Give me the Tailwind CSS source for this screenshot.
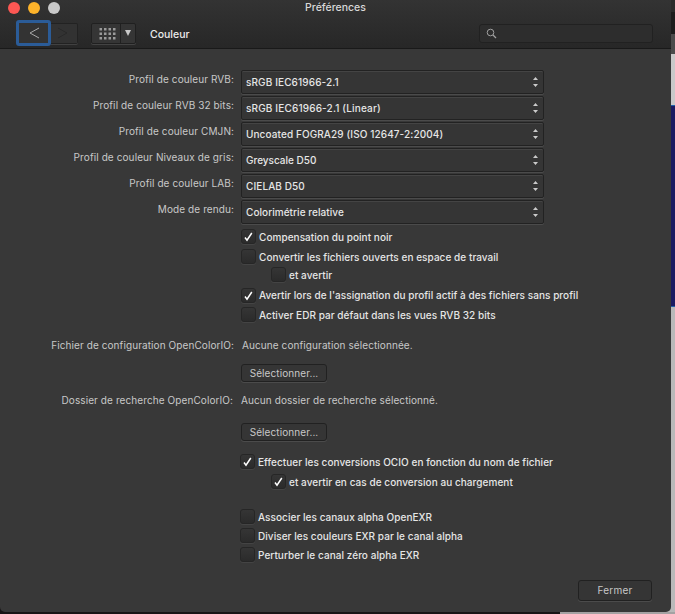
<!DOCTYPE html>
<html lang="fr">
<head>
<meta charset="utf-8">
<title>Préférences</title>
<script src="https://cdn.jsdelivr.net/npm/@tailwindcss/browser@4"></script>
</head>
<body class="w-[675px] h-[614px] overflow-hidden bg-[#171415] flex font-['Inter',sans-serif] text-[10px] leading-[15px] text-[#e6e6e6] relative">
<!-- desktop behind the window -->
<div class="absolute right-0 top-0 w-6 h-[614px] flex flex-col">
  <div class="h-3 bg-[#2b2b2b]"></div>
  <div class="h-[22px] bg-[#1d1d1d]"></div>
  <div class="h-5 bg-[#4b4b4b]"></div>
  <div class="h-[51px] bg-[#c9c9c9]"></div>
  <div class="h-[202px] bg-[#1b1b62] border-y border-[#2260a8]"></div>
  <div class="h-[306px] bg-[#b9b9b9]"></div>
</div>
<div class="absolute left-[560px] top-[612px] w-[115px] h-[2px] bg-[#a5a2a3]"></div>
<main class="relative w-[671px] h-[612px] rounded-b-[5px] bg-[#383838] flex flex-col overflow-hidden">
  <header class="h-[49px] shrink-0 bg-linear-to-b from-[#333333] to-[#272727] border-b border-[#191919]">
    <div class="h-4 grid grid-cols-[62px_1fr_62px] items-center">
      <div class="flex gap-2 pl-2">
        <i class="size-3 rounded-full bg-[#fc5753]"></i><i class="size-3 rounded-full bg-[#fdb32a]"></i><i class="size-3 rounded-full bg-[#c8c8c8]"></i>
      </div>
      <h1 class="text-center text-[10.5px] text-[#d8d8d8] font-medium -mt-px">Préférences</h1>
    </div>
    <div class="flex items-center h-[34px] pl-4">
      <div class="flex items-center w-[62px] h-[26px] relative">
        <div class="w-[35px] h-[26px] border-[3px] border-[#2b5c98] rounded-[3px] bg-[#333333] flex items-center justify-center pl-[2px] z-10">
          <svg width="11" height="12" viewBox="0 0 11 12" fill="none" stroke="#a9a9a9" stroke-width="1"><path d="M10 1 1 6l9 5"/></svg>
        </div>
        <div class="w-[27px] h-[21px] border border-l-0 border-[#222] rounded-r-[2px] bg-[#323232] shadow-[0_1px_0_#414141] flex items-center pl-[6px]">
          <svg width="11" height="12" viewBox="0 0 11 12" fill="none" stroke="#292929" stroke-width="1"><path d="m1 1 9 5-9 5"/></svg>
        </div>
      </div>
      <div class="ml-[13px] w-[45px] h-[21px] border border-[#202020] rounded-[2px] bg-[#353535] shadow-[0_1px_0_#434343] flex">
        <div class="w-[29px] border-r border-[#202020] flex items-center justify-center pl-[2px]">
          <svg width="17" height="13" viewBox="0 0 17 13" fill="#9b9b9b"><path d="M0.500 1h2.500v2.500H0.500zM5 1h2.500v2.500H5zM9.500 1h2.500v2.500H9.500zM14 1h2.500v2.500H14zM0.500 5.500h2.500v2.500H0.500zM5 5.500h2.500v2.500H5zM9.500 5.500h2.500v2.500H9.500zM14 5.500h2.500v2.500H14zM0.500 10h2.500v2.500H0.500zM5 10h2.500v2.500H5zM9.500 10h2.500v2.500H9.500zM14 10h2.500v2.500H14z"/></svg>
        </div>
        <div class="flex-1 flex items-center justify-center"><svg width="6" height="6" viewBox="0 0 6 6" fill="#c8c8c8"><path d="M0 0h6L3 6z"/></svg></div>
      </div>
      <h2 class="ml-[14px] mt-[2px] text-[10.5px] font-medium text-[#ececec]">Couleur</h2>
      <div class="ml-auto mr-[18px] w-[174px] h-[19px] border border-[#212121] rounded-[3px] bg-[#2d2d2d] flex items-center pl-[6px]">
        <svg width="11" height="11" viewBox="0 0 11 11" fill="none" stroke="#a0a0a0"><circle cx="4.500" cy="4.500" r="3.300"/><path d="m7 7 3 3" stroke-width="1.300"/></svg>
      </div>
    </div>
  </header>

  <section class="pt-[21px] flex flex-col">
    <div class="h-[26px] flex"><label class="w-[234px] mt-[2px] text-right text-[#c8c8c8] tracking-[0.1px]">Profil de couleur RVB:</label><div class="ml-[7px] w-[303px] h-6 border border-[#222] rounded-[2px] bg-[#353535] shadow-[0_1px_0_#4b4b4b,inset_0_1px_0_#444] flex items-center justify-between pl-1 pr-[5px] font-medium tracking-[0.12px]"><span class="pt-px">sRGB IEC61966-2.1</span><svg width="5" height="10" viewBox="0 0 5 10" fill="#cacaca"><path d="M2.500 0 5 3H0zM0 7h5L2.500 10z"/></svg></div></div>
    <div class="h-[26px] flex"><label class="w-[234px] mt-[2px] text-right text-[#c8c8c8] tracking-[0.1px]">Profil de couleur RVB 32 bits:</label><div class="ml-[7px] w-[303px] h-6 border border-[#222] rounded-[2px] bg-[#353535] shadow-[0_1px_0_#4b4b4b,inset_0_1px_0_#444] flex items-center justify-between pl-1 pr-[5px] font-medium tracking-[0.16px]"><span class="pt-px">sRGB IEC61966-2.1 (Linear)</span><svg width="5" height="10" viewBox="0 0 5 10" fill="#cacaca"><path d="M2.500 0 5 3H0zM0 7h5L2.500 10z"/></svg></div></div>
    <div class="h-[26px] flex"><label class="w-[234px] mt-[2px] text-right text-[#c8c8c8] tracking-[0.1px]">Profil de couleur CMJN:</label><div class="ml-[7px] w-[303px] h-6 border border-[#222] rounded-[2px] bg-[#353535] shadow-[0_1px_0_#4b4b4b,inset_0_1px_0_#444] flex items-center justify-between pl-1 pr-[5px] font-medium tracking-[0.1px]"><span class="pt-px">Uncoated FOGRA29 (ISO 12647-2:2004)</span><svg width="5" height="10" viewBox="0 0 5 10" fill="#cacaca"><path d="M2.500 0 5 3H0zM0 7h5L2.500 10z"/></svg></div></div>
    <div class="h-[26px] flex"><label class="w-[234px] mt-[2px] text-right text-[#c8c8c8] tracking-[0.1px]">Profil de couleur Niveaux de gris:</label><div class="ml-[7px] w-[303px] h-6 border border-[#222] rounded-[2px] bg-[#353535] shadow-[0_1px_0_#4b4b4b,inset_0_1px_0_#444] flex items-center justify-between pl-1 pr-[5px] font-medium"><span class="pt-px">Greyscale D50</span><svg width="5" height="10" viewBox="0 0 5 10" fill="#cacaca"><path d="M2.500 0 5 3H0zM0 7h5L2.500 10z"/></svg></div></div>
    <div class="h-[26px] flex"><label class="w-[234px] mt-[2px] text-right text-[#c8c8c8] tracking-[0.1px]">Profil de couleur LAB:</label><div class="ml-[7px] w-[303px] h-6 border border-[#222] rounded-[2px] bg-[#353535] shadow-[0_1px_0_#4b4b4b,inset_0_1px_0_#444] flex items-center justify-between pl-1 pr-[5px] font-medium tracking-[0.1px]"><span class="pt-px">CIELAB D50</span><svg width="5" height="10" viewBox="0 0 5 10" fill="#cacaca"><path d="M2.500 0 5 3H0zM0 7h5L2.500 10z"/></svg></div></div>
    <div class="h-[26px] flex"><label class="w-[234px] mt-[2px] text-right text-[#c8c8c8] tracking-[0.1px]">Mode de rendu:</label><div class="ml-[7px] w-[303px] h-6 border border-[#222] rounded-[2px] bg-[#353535] shadow-[0_1px_0_#4b4b4b,inset_0_1px_0_#444] flex items-center justify-between pl-1 pr-[5px] font-medium tracking-[0.05px]"><span class="pt-px">Colorimétrie relative</span><svg width="5" height="10" viewBox="0 0 5 10" fill="#cacaca"><path d="M2.500 0 5 3H0zM0 7h5L2.500 10z"/></svg></div></div>
  </section>

  <section class="pt-[3px] pl-[241px] font-medium tracking-[0.05px]">
    <div class="h-5 flex gap-[3px]"><i class="size-[15px] rounded-[3px] border border-[#262626] bg-linear-to-b from-[#353535] to-[#2b2b2b] shadow-[0_1px_0_#444] flex items-center justify-center"><svg width="9" height="10" viewBox="0 0 9 10" fill="none" stroke="#fff" stroke-width="1.500"><path d="m1 5.500 2 2.700L7.800 1"/></svg></i><span class="pt-px">Compensation du point noir</span></div>
    <div class="h-[18px] flex gap-[3px]"><i class="size-[15px] rounded-[3px] border border-[#262626] bg-linear-to-b from-[#353535] to-[#2b2b2b] shadow-[0_1px_0_#444]"></i><span class="pt-px">Convertir les fichiers ouverts en espace de travail</span></div>
    <div class="h-[21px] flex gap-[3px] pl-[30px]"><i class="size-[15px] rounded-[3px] border border-[#262626] bg-linear-to-b from-[#353535] to-[#2b2b2b] shadow-[0_1px_0_#444]"></i><span class="pt-px">et avertir</span></div>
    <div class="h-[19px] flex gap-[3px]"><i class="size-[15px] rounded-[3px] border border-[#262626] bg-linear-to-b from-[#353535] to-[#2b2b2b] shadow-[0_1px_0_#444] flex items-center justify-center"><svg width="9" height="10" viewBox="0 0 9 10" fill="none" stroke="#fff" stroke-width="1.500"><path d="m1 5.500 2 2.700L7.800 1"/></svg></i><span>Avertir lors de l'assignation du profil actif à des fichiers sans profil</span></div>
    <div class="h-[15px] flex gap-[3px]"><i class="size-[15px] rounded-[3px] border border-[#262626] bg-linear-to-b from-[#353535] to-[#2b2b2b] shadow-[0_1px_0_#444]"></i><span class="pt-px">Activer EDR par défaut dans les vues RVB 32 bits</span></div>
  </section>

  <section class="pt-4 text-[#c8c8c8] tracking-[0.09px]">
    <div class="h-[26px] flex"><label class="w-[234px] text-right">Fichier de configuration OpenColorIO:</label><span class="ml-2">Aucune configuration sélectionnée.</span></div>
    <div class="ml-[241px] w-[86px] h-[18px] border border-[#212121] rounded-[3px] bg-[#353535] shadow-[0_1px_0_#4b4b4b] flex items-center justify-center">Sélectionner...</div>
    <div class="pt-[11px] h-[41px] flex"><label class="w-[233px] text-right">Dossier de recherche OpenColorIO:</label><span class="ml-2">Aucun dossier de recherche sélectionné.</span></div>
    <div class="ml-[241px] w-[86px] h-[18px] border border-[#212121] rounded-[3px] bg-[#353535] shadow-[0_1px_0_#4b4b4b] flex items-center justify-center">Sélectionner...</div>
  </section>

  <section class="pt-[13px] pl-[240px] font-medium tracking-[0.05px]">
    <div class="h-5 flex gap-[3px]"><i class="size-[15px] rounded-[3px] border border-[#262626] bg-linear-to-b from-[#353535] to-[#2b2b2b] shadow-[0_1px_0_#444] flex items-center justify-center"><svg width="9" height="10" viewBox="0 0 9 10" fill="none" stroke="#fff" stroke-width="1.500"><path d="m1 5.500 2 2.700L7.800 1"/></svg></i><span class="pt-px">Effectuer les conversions OCIO en fonction du nom de fichier</span></div>
    <div class="h-[35px] flex gap-[3px] pl-[31px]"><i class="size-[15px] rounded-[3px] border border-[#262626] bg-linear-to-b from-[#353535] to-[#2b2b2b] shadow-[0_1px_0_#444] flex items-center justify-center"><svg width="9" height="10" viewBox="0 0 9 10" fill="none" stroke="#fff" stroke-width="1.500"><path d="m1 5.500 2 2.700L7.800 1"/></svg></i><span class="pt-px">et avertir en cas de conversion au chargement</span></div>
    <div class="h-[19px] flex gap-[3px]"><i class="size-[15px] rounded-[3px] border border-[#262626] bg-linear-to-b from-[#353535] to-[#2b2b2b] shadow-[0_1px_0_#444]"></i><span class="pt-px">Associer les canaux alpha OpenEXR</span></div>
    <div class="h-[19px] flex gap-[3px]"><i class="size-[15px] rounded-[3px] border border-[#262626] bg-linear-to-b from-[#353535] to-[#2b2b2b] shadow-[0_1px_0_#444]"></i><span class="pt-px">Diviser les couleurs EXR par le canal alpha</span></div>
    <div class="h-[15px] flex gap-[3px]"><i class="size-[15px] rounded-[3px] border border-[#262626] bg-linear-to-b from-[#353535] to-[#2b2b2b] shadow-[0_1px_0_#444]"></i><span class="pt-px">Perturber le canal zéro alpha EXR</span></div>
  </section>
  <footer class="mt-[18px] flex justify-end pr-[19px]">
    <div class="w-[74px] h-[21px] border border-[#212121] rounded-[3px] bg-[#353535] shadow-[0_1px_0_#4b4b4b] flex items-center justify-center text-[#c8c8c8] tracking-[0.2px]">Fermer</div>
  </footer>
</main>
</body>
</html>
